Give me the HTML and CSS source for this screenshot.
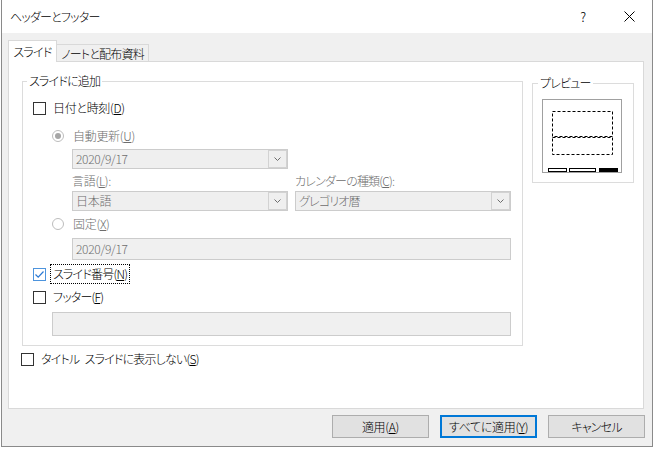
FILE: index.html
```html
<!DOCTYPE html>
<html lang="ja">
<head>
<meta charset="utf-8">
<title>ヘッダーとフッター</title>
<link rel="stylesheet" href="styles.css">
</head>
<body>
<div class="window">
  <div class="titlebar">
    <span class="title kana">ヘッダーとフッター</span>
    <span class="cap-btn help">?</span>
    <span class="cap-btn close"><svg width="11" height="11" viewBox="0 0 11 11"><path d="M0.5 0.5 L10.5 10.5 M10.5 0.5 L0.5 10.5" stroke="#000" stroke-width="1" fill="none"/></svg></span>
  </div>
  <div class="client">
    <div class="tabs">
      <div class="tab active kana">スライド</div>
      <div class="tab inactive kana">ノートと配布資料</div>
    </div>
    <div class="panel">
      <div class="panel-row">
        <fieldset class="group main">
          <legend class="kana">スライドに追加</legend>
          <div class="group-body">
            <div class="check-row">
              <span class="box"></span>
              <span class="lbl">日付と時刻(<u>D</u>)</span>
            </div>
            <div class="sub">
              <div class="radio-row r1">
                <svg class="radio" width="12" height="12" viewBox="0 0 12 12"><circle cx="6" cy="6" r="5.5" fill="#fff" stroke="#bcbcbc"/><circle cx="6" cy="6" r="3" fill="#a6a6a6"/></svg>
                <span class="dis">自動更新(<u>U</u>)</span>
              </div>
              <div class="indent">
                <div class="combo c1">
                  <span class="val">2020/9/17</span>
                  <span class="drop"><svg width="7" height="4" viewBox="0 0 7 4"><path d="M0.5 0.5 L3.5 3.5 L6.5 0.5" stroke="#6d6d6d" fill="none"/></svg></span>
                </div>
                <div class="pair">
                  <span class="dis">言語(<u>L</u>):</span>
                  <span class="dis kana">カレンダーの種類(<u>C</u>):</span>
                  <div class="combo">
                    <span class="val">日本語</span>
                    <span class="drop"><svg width="7" height="4" viewBox="0 0 7 4"><path d="M0.5 0.5 L3.5 3.5 L6.5 0.5" stroke="#6d6d6d" fill="none"/></svg></span>
                  </div>
                  <div class="combo">
                    <span class="val kana">グレゴリオ暦</span>
                    <span class="drop"><svg width="7" height="4" viewBox="0 0 7 4"><path d="M0.5 0.5 L3.5 3.5 L6.5 0.5" stroke="#6d6d6d" fill="none"/></svg></span>
                  </div>
                </div>
              </div>
              <div class="radio-row r2">
                <svg class="radio" width="12" height="12" viewBox="0 0 12 12"><circle cx="6" cy="6" r="5.5" fill="#fff" stroke="#bcbcbc"/></svg>
                <span class="dis">固定(<u>X</u>)</span>
              </div>
              <div class="indent">
                <div class="textbox fixed"><span class="val">2020/9/17</span></div>
              </div>
            </div>
            <div class="check-row focus">
              <span class="box checked"><svg width="11" height="11" viewBox="0 0 11 11"><path d="M1.5 5.5 L4.2 8.2 L9.5 2.5" stroke="#2b79d4" stroke-width="1.2" fill="none"/></svg></span>
              <span class="lbl kana">スライド番号(<u>N</u>)</span>
            </div>
            <div class="check-row footer-row">
              <span class="box"></span>
              <span class="lbl kana">フッター(<u>F</u>)</span>
            </div>
            <div class="sub">
              <div class="textbox footer"></div>
            </div>
          </div>
        </fieldset>
        <fieldset class="group preview">
          <legend class="kana">プレビュー</legend>
          <div class="preview-body">
            <svg width="80" height="74" viewBox="0 0 80 74">
              <rect x="0.5" y="0.5" width="79" height="73" fill="#fff" stroke="#a0a0a0"/>
              <rect x="10.5" y="12.5" width="60" height="25" fill="none" stroke="#000" stroke-dasharray="3 2"/>
              <rect x="10.5" y="38.5" width="60" height="17" fill="none" stroke="#000" stroke-dasharray="3 2"/>
              <rect x="6.5" y="69.5" width="18" height="3" fill="#fff" stroke="#000"/>
              <rect x="27.5" y="69.5" width="26" height="3" fill="#fff" stroke="#000"/>
              <rect x="57" y="69" width="19" height="4" fill="#000"/>
            </svg>
          </div>
        </fieldset>
      </div>
      <div class="check-row title-check">
        <span class="box"></span>
        <span class="lbl kana">タイトル&#8194;スライドに表示しない(<u>S</u>)</span>
      </div>
    </div>
    <div class="buttons">
      <div class="btn">適用(<u>A</u>)</div>
      <div class="btn default">すべてに適用(<u>Y</u>)</div>
      <div class="btn kana">キャンセル</div>
    </div>
  </div>
</div>
</body>
</html>
```

FILE: styles.css
```css
* { box-sizing: border-box; }
html, body { margin: 0; padding: 0; background: #fff; }
body {
  font-family: "Noto Sans CJK JP", sans-serif;
  font-size: 12px;
  font-weight: 300;
  line-height: 16px;
  letter-spacing: -0.3px;
  color: #000;
  font-feature-settings: "palt";
}
.kana { letter-spacing: -0.8px; }
u { text-underline-offset: 1px; }

.window {
  margin-left: 1px;
  width: 652px;
  height: 447px;
  border: 1px solid #8a8a8a;
  border-top: none;
  background: #f0f0f0;
  display: flex;
  flex-direction: column;
}

.titlebar {
  flex: none;
  height: 33px;
  background: #fff;
  display: flex;
  align-items: center;
}
.title { flex: 1; padding-left: 8px; padding-top: 1px; }
.cap-btn {
  width: 46px;
  height: 33px;
  display: flex;
  align-items: center;
  justify-content: center;
}
.help { font-size: 13px; padding-top: 1px; }
.close svg { display: block; }

.client {
  flex: 1;
  padding: 7px 7px 8px 6px;
  display: flex;
  flex-direction: column;
}

.tabs { display: flex; align-items: flex-end; height: 21px; }
.tab {
  display: flex;
  align-items: center;
  justify-content: center;
  border-top: 1px solid #d9d9d9;
  border-right: 1px solid #d9d9d9;
  white-space: nowrap;
}
.tab.active {
  width: 49px;
  height: 22px;
  margin-bottom: -1px;
  background: #fff;
  border-left: 1px solid #d9d9d9;
  position: relative;
  z-index: 1;
}
.tab.inactive { width: 92px; height: 17px; padding-top: 1px; }

.panel {
  width: 636px;
  height: 348px;
  background: #fff;
  border: 1px solid #d9d9d9;
  padding: 11px 0 0 12px;
}
.panel-row { display: flex; align-items: flex-start; margin-left: 1px; }

.group {
  margin: 0;
  padding: 0;
  min-width: 0;
  border: 1px solid #dcdcdc;
}
.group legend { padding: 0 2px; margin-left: 4px; line-height: 16px; }
.main { width: 501px; }
.preview { width: 102px; margin-left: 9px; margin-top: 2px; }
.preview legend { margin-left: 5px; }
.preview-body { padding: 8px 11px 9px 9px; }
.preview-body svg { display: block; }

.group-body { padding: 11px 11px 9px 10px; }

.check-row { display: flex; align-items: center; height: 16px; }
.box {
  flex: none;
  width: 13px;
  height: 13px;
  border: 1px solid #333;
  background: #fff;
  margin-right: 4px;
}
.box svg { display: block; }
.box.checked { border-color: #4d94dd; }
.lbl { padding: 0 2px; border: 1px dotted transparent; line-height: 16px; white-space: nowrap; }
.check-row.focus { height: 20px; margin-top: 4px; }
.check-row.focus .lbl { border-color: #000; line-height: 18px; }
.check-row.footer-row { margin-top: 5px; }

.sub { padding-left: 19px; }
.indent { padding-left: 20px; }
.dis { color: #6d6d6d; white-space: nowrap; }

.radio-row { display: flex; align-items: center; height: 16px; }
.radio { flex: none; margin-right: 9px; display: block; }
.radio-row.r1 { margin-top: 12px; }
.radio-row.r2 { margin-top: 5px; }

.combo {
  width: 216px;
  height: 20px;
  border: 1px solid #cccccc;
  background: #efefef;
  display: flex;
  align-items: stretch;
}
.combo.c1 { margin-top: 5px; }
.combo .val { flex: 1; padding-left: 3px; color: #6d6d6d; line-height: 18px; }
.drop {
  flex: none;
  width: 19px;
  border: 1px solid #d2d2d2;
  display: flex;
  align-items: center;
  justify-content: center;
}
.drop svg { display: block; }

.pair {
  margin-top: 4px;
  display: grid;
  grid-template-columns: 216px 216px;
  column-gap: 7px;
  row-gap: 2px;
}
.pair > .dis { line-height: 16px; }

.textbox {
  border: 1px solid #cccccc;
  background: #f0f0f0;
}
.textbox .val { color: #6d6d6d; padding-left: 3px; line-height: 20px; display: block; }
.textbox.fixed { width: 439px; height: 22px; margin-top: 6px; }
.textbox.footer { width: 459px; height: 24px; margin-top: 7px; }

.check-row.title-check { margin-top: 5px; }

.buttons {
  display: flex;
  justify-content: flex-end;
  gap: 11px;
  margin-top: 6px;
}
.btn {
  width: 97px;
  height: 23px;
  border: 1px solid #adadad;
  background: #e1e1e1;
  display: flex;
  align-items: center;
  justify-content: center;
  white-space: nowrap;
}
.btn.default { border-color: #0078d7; box-shadow: inset 0 0 0 1px #0078d7; }
```
